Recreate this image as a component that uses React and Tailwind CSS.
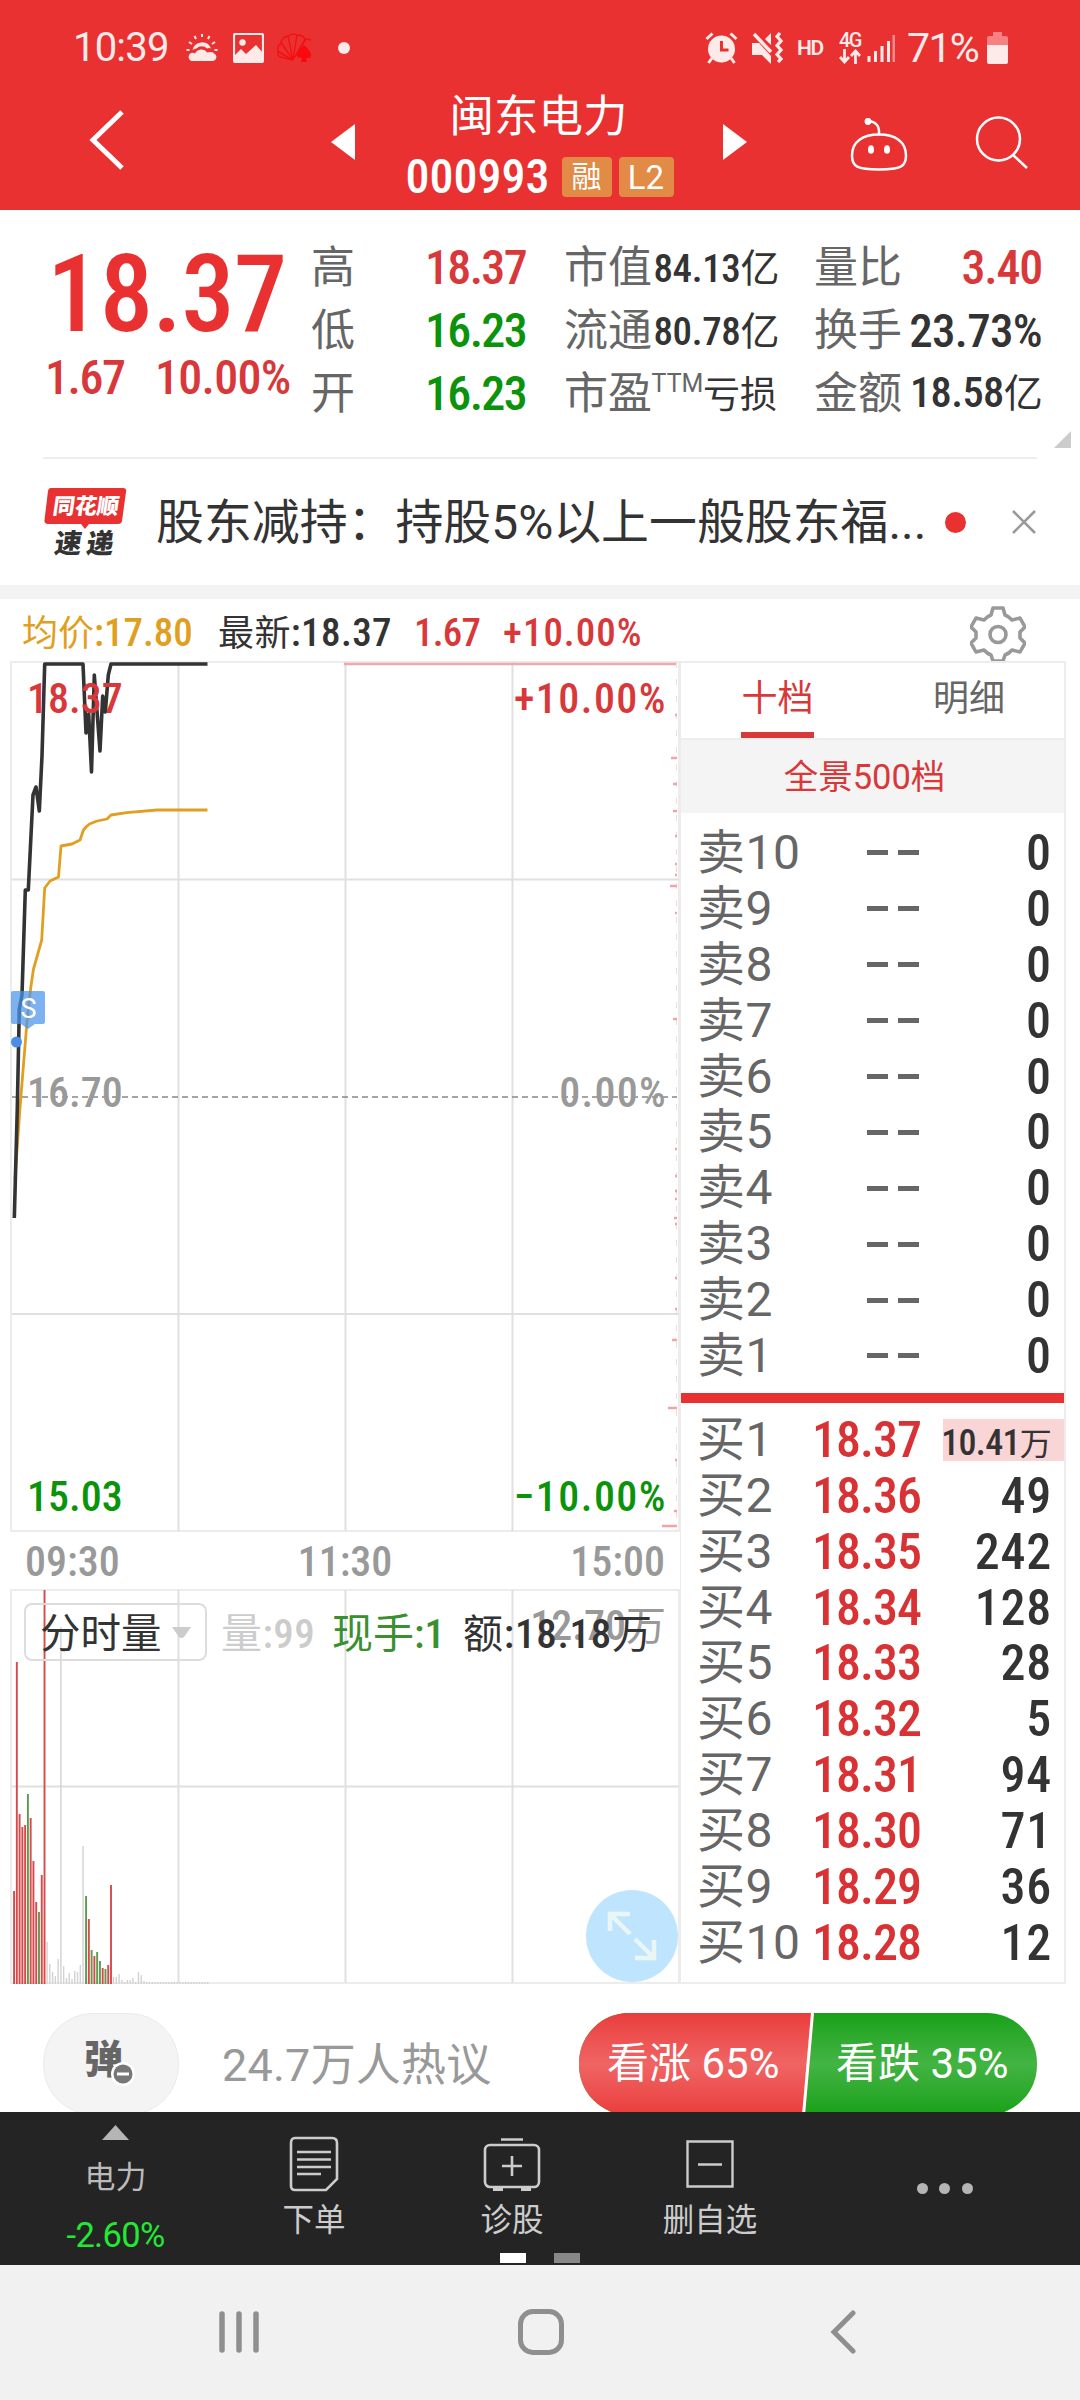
// src/App.jsx
import React from 'react';

const BODY = "[font-family:Roboto,'Noto_Sans_CJK_SC',sans-serif]";
const NUM = "[font-family:'Roboto_Condensed','Noto_Sans_CJK_SC',sans-serif] font-[480]";

const SELL_LEVELS = [10, 9, 8, 7, 6, 5, 4, 3, 2, 1];

const BUY_LEVELS = [
  { level: 1, price: '18.37', volume: '10.41', highlight: true },
  { level: 2, price: '18.36', volume: '49' },
  { level: 3, price: '18.35', volume: '242' },
  { level: 4, price: '18.34', volume: '128' },
  { level: 5, price: '18.33', volume: '28' },
  { level: 6, price: '18.32', volume: '5' },
  { level: 7, price: '18.31', volume: '94' },
  { level: 8, price: '18.30', volume: '71' },
  { level: 9, price: '18.29', volume: '36' },
  { level: 10, price: '18.28', volume: '12' }
];

const PRICE_LINE =
  '14.3,1218 17.3,1108 19.3,1009 22,995 25.3,890 28.3,890 33,795 36,787 39.3,811 42,756 44.7,664 83,664 86,733 88.7,714 91.5,772 94.3,675 100,751 102.7,696 105.3,712 108.3,675 111,664 207.5,664';

const AVG_LINE =
  '15,1179 20,1108 26.7,1025 30.7,988 33.5,969 37.5,955 41.7,940 44.7,888 50,881 58.5,877 61,846 72,844 80,840 83.5,830 86,827 89.5,824 97,821 107,819 111,815 126.7,812.6 157,810 207.5,810';

// [y, length] of each price-distribution tick
const TICKS = [
  [715, 2], [758, 6], [784, 4], [811, 4], [836, 2], [864, 2], [875, 2], [886, 7], [913, 2],
  [1019, 4], [1149, 2], [1176, 2], [1191, 2], [1199, 2], [1218, 3], [1224, 2], [1278, 2],
  [1309, 2], [1340, 5], [1408, 9], [1460, 2], [1511, 3], [1526, 15]
];

// [height, colour] per minute, r = up, g = down, n = flat
const VOLUME = [
  [93, 'r'], [322, 'r'], [170, 'r'], [157, 'r'], [159, 'r'], [190, 'g'], [166, 'r'], [123, 'r'],
  [82, 'r'], [72, 'g'], [109, 'r'], [394, 'r'], [42, 'n'], [20, 'n'], [12, 'n'], [8, 'n'],
  [25, 'n'], [357, 'n'], [18, 'n'], [6, 'n'], [11, 'n'], [5, 'n'], [13, 'n'], [12, 'n'],
  [19, 'n'], [138, 'n'], [88, 'g'], [65, 'r'], [34, 'g'], [28, 'r'], [32, 'g'], [23, 'g'],
  [16, 'r'], [15, 'g'], [19, 'r'], [99, 'r'], [7, 'n'], [7, 'n'], [10, 'n'], [4, 'n'],
  [2, 'n'], [4, 'n'], [4, 'n'], [6, 'n'], [2, 'n'], [12, 'n'], [9, 'n'], [3, 'n'],
  ...Array(23).fill([2, 'n'])
];

const VOLUME_COLORS = { r: '#d8494a', g: '#5c9a50', n: '#d2d2d2' };

const StatusBar = () => (
  <div className="flex h-24 items-center pl-[73px] pr-[72px] text-[#ffeaea]">
    <span className="w-[113px] text-[40px] leading-none tracking-[-0.02em]">10:39</span>
    <svg className="h-[30px] w-8" viewBox="0 0 32 30" fill="currentColor">
      <path d="M6.500 17a9.700 9.700 0 0 1 18.500-1.500q-2-.8-4 0a7 7 0 0 0-10.500 0q-2 .2-4 1.500z" />
      <path d="M5 28a4.5 4.5 0 0 1 0-8q2-.6 4 .4a7 7 0 0 1 12-1q6-1 7 1a4 4 0 0 1-1 7.600z" />
      <path d="M16 1v3M8.500 3l1.500 3M23.500 3l-1.500 3M3 9l3 2M29 9l-3 2M.5 17h3M31.500 17h-3" stroke="currentColor" strokeWidth="2" />
    </svg>
    <svg className="ml-[15px] h-[30px] w-[31px]" viewBox="0 0 31 30">
      <rect x="1" y="1" width="29" height="28" rx="1.500" fill="none" stroke="currentColor" strokeWidth="2.200" />
      <circle cx="9.500" cy="9.500" r="3.200" fill="currentColor" />
      <path d="M2 22l6-6 5 5 10-9 7 8v8H2z" fill="currentColor" />
    </svg>
    <svg className="ml-3 h-[30px] w-9" viewBox="0 0 36 30">
      <g fill="none" stroke="#f50f12" strokeWidth="1.300" strokeLinejoin="round">
        <path d="M17 27L4 24q-3-2-2-5zM17 27L2 18q-1-5 3-8zM17 27L5 9q2-5 7-6zM17 27L12 3q4-3 9-1zM17 27L21 2q6 0 8 4zM19 24L30 6l5 1" />
      </g>
      <path d="M28 12q7 6 7 10t-5 3l1 4h-6l1-4q-5 0-5-3t7-10z" fill="#fa0a10" />
    </svg>
    <span className="ml-[26px] size-3 rounded-full bg-[#ffeaea]" />
    <svg className="ml-auto h-8 w-[33px]" viewBox="0 0 33 32" fill="currentColor">
      <circle cx="16.500" cy="17" r="13.500" />
      <path d="M1.500 7l6-5.500M31.500 7l-6-5.500M7 26l-3.500 5M26 26l3.500 5" stroke="currentColor" strokeWidth="3" />
      <path d="M16.500 9v9h7" fill="none" stroke="#e83130" strokeWidth="3" />
    </svg>
    <svg className="ml-[13px] h-8 w-8" viewBox="0 0 32 32" fill="currentColor">
      <path d="M1 11h7l12 13v8l-9-9H1zM14 7l6-6v12z" />
      <path d="M3 2l17 18" stroke="currentColor" strokeWidth="3.500" />
      <path d="M29 1l-3 3.500 4 4.500-4 4.500 4 4.500-4 4.500 4 4.500-3 3" fill="none" stroke="currentColor" strokeWidth="3.200" />
    </svg>
    <span className="ml-[14px] w-[28px] text-[21px] font-semibold leading-none tracking-[-0.06em]">HD</span>
    <div className="ml-3 flex w-[26px] flex-col items-center">
      <span className="text-[20px] font-medium leading-[17px] tracking-[-0.08em]">4G</span>
      <svg className="h-[15px] w-[22px]" viewBox="0 0 22 15" fill="none" stroke="currentColor" strokeWidth="2.800">
        <path d="M5.500 0v13M1 8l4.500 5L10 8M16.500 15V2M12 7l4.500-5L21 7" />
      </svg>
    </div>
    <svg className="ml-1 h-7 w-[28px]" viewBox="0 0 28 28">
      <path d="M2 22v6M8.500 17v11M15 12v16M21.500 7v21" stroke="currentColor" strokeWidth="3" />
      <path d="M27 1v27" stroke="#f48a89" strokeWidth="3" />
    </svg>
    <span className="ml-3 w-[80px] whitespace-nowrap text-[41px] leading-none tracking-[-0.040em]">71%</span>
    <svg className="h-8 w-[21px]" viewBox="0 0 21 32">
      <path d="M6 0h9v4h4q2 0 2 2v8H0V6q0-2 2-2h4z" fill="#f58180" />
      <path d="M0 13h21v17q0 2-2 2H2q-2 0-2-2z" fill="currentColor" />
    </svg>
  </div>
);

const TitleBar = () => (
  <div className="flex h-[114px] items-start text-white">
    <svg className="ml-[88px] mt-[13px] h-[62px] w-9" viewBox="0 0 36 62" fill="none" stroke="currentColor" strokeWidth="5">
      <path d="M34 3L5 31l29 28" />
    </svg>
    <svg className="ml-[207px] mt-7 h-9 w-6" viewBox="0 0 24 36" fill="currentColor">
      <path d="M24 0v36L0 18z" />
    </svg>
    <div className="flex w-[369px] flex-col items-center">
      <div className="-ml-[2px] -mt-[5px] text-[44.500px] leading-[52px]">闽东电力</div>
      <div className="mt-[6px] flex items-center">
        <span className={`${NUM} w-[156px] whitespace-nowrap text-[48px] leading-[56px]`}>000993</span>
        <span className="mr-[7px] flex h-10 w-[50px] items-center justify-center rounded bg-[#e28b46] text-[30px] leading-none">融</span>
        <span className="flex h-10 w-[55px] items-center justify-center rounded bg-[#e28b46] text-[33px] leading-none">L2</span>
      </div>
    </div>
    <svg className="-ml-px mt-7 h-9 w-6" viewBox="0 0 24 36" fill="currentColor">
      <path d="M0 0v36l24-18z" />
    </svg>
    <svg className="ml-[103px] mt-[21px] h-[54px] w-[58px]" viewBox="0 0 58 54" fill="none" stroke="currentColor" strokeWidth="2.500">
      <path d="M29 17.500c16 0 27 7 27 21c0 11-5 14-27 14s-27-3-27-14c0-14 11-21 27-21z" />
      <path d="M29 17q1-12-11-13" />
      <circle cx="18" cy="4.500" r="3.400" fill="currentColor" stroke="none" />
      <ellipse cx="21" cy="32.500" rx="3" ry="4.300" fill="currentColor" stroke="none" />
      <ellipse cx="37" cy="32.500" rx="3" ry="4.300" fill="currentColor" stroke="none" />
    </svg>
    <svg className="ml-[67px] mt-[19px] h-[54px] w-[54px]" viewBox="0 0 54 54" fill="none" stroke="currentColor" strokeWidth="2.500">
      <circle cx="23.500" cy="24" r="21.500" />
      <path d="M38 40l14 13" />
    </svg>
  </div>
);

const Stat = ({ label, children, className }) => (
  <div className="flex h-[63px] items-center justify-between">
    <span className="whitespace-nowrap text-[44px] leading-none text-[#666]">{label}</span>
    <span className={`${NUM} whitespace-nowrap leading-none ${className}`}>{children}</span>
  </div>
);

const Quote = () => (
  <div className="relative flex h-[247px] pt-[26px]">
    <div className="w-[311px] text-[#e83130]">
      <div className={`${NUM} pl-[47px] pt-[11px] text-[107px] leading-[96px] tracking-[-0.008em]`}>18.37</div>
      <div className={`${NUM} flex pl-[45px] pt-[9px] text-[48px] leading-[52px] tracking-[-0.015em] text-[#d9383a]`}>
        <span className="w-[110px] tracking-[-0.03em]">1.67</span>
        <span className="whitespace-nowrap">10.00%</span>
      </div>
    </div>
    <div className="w-[215px]">
      <Stat label="高" className="text-[48px] tracking-[-0.035em] text-[#d9383a]">18.37</Stat>
      <Stat label="低" className="text-[48px] tracking-[-0.035em] text-[#0c930c]">16.23</Stat>
      <Stat label="开" className="text-[48px] tracking-[-0.035em] text-[#0c930c]">16.23</Stat>
    </div>
    <div className="ml-[38px] w-[215px]">
      <Stat label="市值" className="pt-1 text-[39px] tracking-[-0.01em] text-[#333]">84.13<span className="font-normal">亿</span></Stat>
      <Stat label="流通" className="pt-1 text-[39px] tracking-[-0.01em] text-[#333]">80.78<span className="font-normal">亿</span></Stat>
      <div className="flex h-[63px] items-center justify-between">
        <span className="text-[44px] leading-none text-[#666]">市盈</span>
        <span className="-ml-2 -mt-5 text-[25px] leading-none text-[#666]">TTM</span>
        <span className="-ml-2 pr-0.5 pt-1 text-[37px] leading-none text-[#333]">亏损</span>
      </div>
    </div>
    <div className="ml-[35px] w-[228px]">
      <Stat label="量比" className="text-[48px] tracking-[-0.025em] text-[#d9383a]">3.40</Stat>
      <Stat label="换手" className="text-[47px] tracking-[-0.015em] text-[#333]">23.73%</Stat>
      <Stat label="金额" className="text-[42.500px] tracking-[-0.015em] text-[#333]">18.58<span className="text-[39px] font-normal">亿</span></Stat>
    </div>
    <svg className="absolute bottom-[9px] right-[9px] size-[17px]" viewBox="0 0 17 17" fill="#ccc">
      <path d="M17 0v17H0z" />
    </svg>
  </div>
);

const News = () => (
  <div className="mx-[43px] flex h-32 items-center border-t-2 border-[#eee]">
    <svg className="h-[76px] w-[85px] overflow-visible" viewBox="0 -2 85 76">
      <path d="M8 2h72q4 0 3 4l-4 29q-.6 3-4 3H46l-4 5-4-5H5q-4 0-3.500-4L5 5q.6-3 3-3z" fill="#e83130" />
      <g className="[font-family:'Noto_Sans_CJK_SC',sans-serif]" transform="skewX(-8)" fontWeight="900">
        <text x="13" y="28.500" fontSize="22" fill="#fff">同花顺</text>
        <text x="20" y="67" fontSize="27" letterSpacing="5" fill="#333">速递</text>
      </g>
    </svg>
    <span className="ml-7 w-[780px] whitespace-nowrap pt-1 text-[47.900px] leading-none text-[#333]">股东减持：持股5%以上一般股东福...</span>
    <span className="ml-[9px] size-[21px] shrink-0 rounded-full bg-[#e83130]" />
    <svg className="ml-[46px] size-6 shrink-0" viewBox="0 0 24 24" stroke="#999" strokeWidth="2.600">
      <path d="M1 1l22 22M23 1L1 23" />
    </svg>
  </div>
);

const Summary = () => (
  <div className={`${NUM} flex h-[62px] items-center pl-[22px] pt-[7px] text-[39px] leading-none text-[#333]`}>
    <div className="flex w-[196px] items-center whitespace-nowrap text-[#e09f20]">
      <span className="text-[36px] font-normal">均价</span>:17.80
    </div>
    <div className="flex w-[196px] items-center whitespace-nowrap tracking-[0.010em]">
      <span className="text-[36px] font-normal">最新</span>:18.37
    </div>
    <span className="w-[89px] tracking-[-0.02em] text-[#d9383a]">1.67</span>
    <span className="w-[467px] tracking-[0.025em] text-[#d9383a]">+10.00%</span>
    <svg className="size-[56px]" viewBox="0 0 56 56" fill="none" stroke="#999" strokeWidth="3.600" strokeLinejoin="round">
      <path d="M23 2h10l2 7q4 1.500 7 5l8-2 5 9-5 5v6l5 5-5 9-8-2q-3 3.500-7 5l-2 6H23l-2-6q-4-1.500-7-5l-8 2-5-9 5-5v-6l-5-5 5-9 8 2q3-3.500 7-5z" />
      <circle cx="28" cy="28.500" r="8" />
    </svg>
  </div>
);

const PriceChart = () => (
  <div className="relative h-[871px]">
    <svg className="block h-[871px] w-[670px]" viewBox="10 661 670 871" fill="none">
      <rect x="11" y="662" width="668" height="869" stroke="#ececec" strokeWidth="2" />
      <path d="M178.500 662v869M345.500 662v869M512.500 662v869M12 879.500h667M12 1314h667" stroke="#e0e0e0" strokeWidth="2" />
      <path d="M12 1097h665" stroke="#888" strokeWidth="1.600" strokeDasharray="6 4" />
      <path d="M344 664h333" stroke="#f0a9ab" strokeWidth="2.500" />
      <path d="M676.500 662v869" stroke="#f8d9da" strokeWidth="1" strokeDasharray="6 11" />
      {TICKS.map(([y, len]) => (
        <path key={y} d={`M${677 - len} ${y}h${len}`} stroke="#efa5a7" strokeWidth="2.500" />
      ))}
      <polyline points={AVG_LINE} stroke="#e09f20" strokeWidth="2.800" strokeLinejoin="round" />
      <polyline points={PRICE_LINE} stroke="#333" strokeWidth="3.600" strokeLinejoin="round" />
      <path d="M13 991h30q2 0 2 2v29q0 2-2 2H35l-7 5-7-5h-8q-2 0-2-2v-29q0-2 2-2z" fill="#4a94ea" fillOpacity="0.720" />
      <circle cx="16.500" cy="1042" r="5.500" fill="#4a8fe5" />
      <text x="20.500" y="1018" fontSize="27" fill="#fff">S</text>
    </svg>
    <div className={`${NUM} absolute inset-0 flex flex-col justify-between pb-[13px] pl-[17px] pr-[13px] pt-[16px] text-[42px] leading-[44px]`}>
      <div className="flex justify-between text-[#d9383a]">
        <span>18.37</span>
        <span className="tracking-[0.035em]">+10.00%</span>
      </div>
      <div className="-mt-[10px] flex justify-between text-[#999]">
        <span>16.70</span>
        <span className="tracking-[0.030em]">0.00%</span>
      </div>
      <div className="flex justify-between text-[#0c930c]">
        <span>15.03</span>
        <span className="tracking-[0.035em]">−10.00%</span>
      </div>
    </div>
  </div>
);

const VolumeChart = () => (
  <div className="relative h-[395px]">
    <svg className="block h-[395px] w-[670px]" viewBox="10 1589 670 395" fill="none">
      <rect x="11" y="1590" width="668" height="393" stroke="#ececec" strokeWidth="2" />
      <path d="M178.500 1590v393M345.500 1590v393M512.500 1590v393M12 1786.500h667" stroke="#e0e0e0" strokeWidth="2" />
      {VOLUME.map(([h, c], i) => (
        <rect key={i} x={13.100 + i * 2.770} y={1984 - h} width={c === 'n' ? 1.400 : 1.900} height={h} fill={VOLUME_COLORS[c]} />
      ))}
    </svg>
    <div className={`${NUM} absolute right-[14px] top-[15px] text-[42px] leading-[44px] text-[#999]`}>
      12.70<span className="text-[40px] font-normal">万</span>
    </div>
    <div className={`${NUM} absolute left-[14px] top-[14px] flex h-[58px] items-center whitespace-nowrap text-[41px] leading-none`}>
      <div className="flex h-[58px] w-[183px] items-center rounded-lg border-2 border-[#ddd] pl-[14px] font-normal text-[#333]">
        <span className="pt-1 text-[40.500px]">分时量</span>
        <svg className="ml-[10px] h-[11px] w-[19px]" viewBox="0 0 19 11" fill="#ccc">
          <path d="M0 0h19l-7 10q-2.500 2-5 0z" />
        </svg>
      </div>
      <span className="ml-[14px] w-[111px] pt-1 tracking-[0.010em] text-[#ccc]"><span className="font-normal">量</span>:99</span>
      <span className="w-[131px] pt-1 text-[#3a9030]"><span className="font-normal">现手</span>:1</span>
      <span className="pt-1 tracking-[0.018em] text-[#333]"><span className="text-[40px] font-normal">额</span>:18.18<span className="text-[40px] font-normal">万</span></span>
    </div>
    <div className="absolute bottom-[2px] right-[2px] flex size-[92px] items-center justify-center rounded-full bg-[#bfe4fe]">
      <svg className="size-[50px]" viewBox="0 0 50 50" fill="none" stroke="#eaf6f4" strokeWidth="4.500">
        <path d="M3 20V3h20M4 4l19 19M47 29v18H28M46 46L28 28" />
      </svg>
    </div>
  </div>
);

const OrderBook = () => (
  <div className="flex h-[1323px] w-[386px] flex-col border-2 border-l border-[#ededed] bg-white text-[48px] leading-none">
    <div className="flex h-[77px] border-b-2 border-[#ededed] pl-[60px] text-[36px]">
      <div className="flex w-[73px] flex-col items-center justify-between pt-[18px] text-[#d9383a]">
        十档
        <span className="h-1.5 w-full bg-[#d9383a]" />
      </div>
      <div className="ml-[119px] pt-[18px] text-[#666]">明细</div>
    </div>
    <div className="flex h-[73px] items-center justify-center bg-[#f4f4f4] pr-4 pt-0.5 text-[34.500px] text-[#d9383a]">
      全景500档
    </div>
    <div className="flex flex-col pt-[12px]">
      {SELL_LEVELS.map((level) => (
        <div key={level} className="flex h-[55.900px] items-center pl-4 pr-[13px] text-[#666]">
          <span className="w-[170px] tracking-[0.010em]">卖{level}</span>
          <span className="flex w-[52px] justify-between">
            <span className="h-[5px] w-[21px] bg-[#666]" />
            <span className="h-[5px] w-[21px] bg-[#666]" />
          </span>
          <span className={`${NUM} ml-auto text-[50px] text-[#333]`}>0</span>
        </div>
      ))}
    </div>
    <div className="mt-[9px] h-[10px] bg-[#e83130]" />
    <div className="flex flex-col pt-[9px]">
      {BUY_LEVELS.map(({ level, price, volume, highlight }) => (
        <div key={level} className="flex h-[55.900px] items-center pl-4 text-[#666]">
          <span className="w-[115px] whitespace-nowrap tracking-[0.010em]">买{level}</span>
          <span className={`${NUM} text-[50px] tracking-[-0.020em] text-[#d93234]`}>{price}</span>
          {highlight ? (
            <span className={`${NUM} ml-auto flex h-[42px] w-[121px] items-end justify-end whitespace-nowrap bg-[#f9d5d5] pr-[13px] text-[36px] tracking-[-0.020em] text-[#333]`}>
              <span>{volume}<span className="text-[32px] font-normal">万</span></span>
            </span>
          ) : (
            <span className={`${NUM} ml-auto pr-[12px] text-[50px] tracking-[0.015em] text-[#333]`}>{volume}</span>
          )}
        </div>
      ))}
    </div>
  </div>
);

const Sentiment = () => (
  <div className="flex h-32 overflow-hidden pl-[43px] pt-[29px]">
    <div className="flex h-[102px] w-[136px] shrink-0 justify-center rounded-[50px] border border-[#ebebeb] bg-[#f4f4f4]">
      <svg className="mt-[22px] h-[54px] w-[56px]" viewBox="0 0 56 54">
        <text x="1" y="37" fontSize="39" fontWeight="900" fill="#666">弹</text>
        <circle cx="40" cy="38" r="12" fill="#fff" />
        <circle cx="40" cy="38" r="9.500" fill="#777" />
        <path d="M34 38h12" stroke="#fff" strokeWidth="3" />
      </svg>
    </div>
    <div className="ml-[43px] w-[357px] text-[45px] leading-[105px] tracking-[0.005em] text-[#999]">24.7万人热议</div>
    <div className="relative flex h-[102px] w-[458px] overflow-hidden rounded-[50px] bg-linear-to-b from-[#17a117] via-[#42b442] to-[#17a117] text-[42px] leading-[102px] text-white">
      <div className="w-[235px] bg-linear-to-b from-[#e93c3c] via-[#f06464] to-[#e93c3c] pl-[28px] [clip-path:polygon(0_0,100%_0,226px_100%,0_100%)]">看涨 65%</div>
      <div className="pl-[22px]">看跌 35%</div>
      <svg className="absolute left-[222px] top-0 h-[102px] w-4" viewBox="0 0 16 102">
        <path d="M11.500 0L2.500 102" stroke="#fff" strokeWidth="3" />
      </svg>
    </div>
  </div>
);

const ToolItem = ({ label, children }) => (
  <div className="flex w-[198px] flex-col items-center pt-5">
    <div className="flex h-[64px] items-center">{children}</div>
    <span className="pt-px text-[31.500px] leading-[48px]">{label}</span>
  </div>
);

const Toolbar = () => (
  <div className="relative flex h-[153px] bg-[#242424] text-[#ccc]">
    <div className="flex w-[215px] flex-col items-center pl-4 pt-[13px] text-[#bbb]">
      <svg className="h-[15px] w-[27px]" viewBox="0 0 27 15" fill="#b5b5b5">
        <path d="M13.500 0L27 15H0z" />
      </svg>
      <span className="pt-[15px] text-[31px] leading-[46px]">电力</span>
      <span className="pt-[14px] text-[34.500px] leading-[40px] tracking-[-0.02em] text-[#22e932]">-2.60%</span>
    </div>
    <ToolItem label="下单">
      <svg className="h-[56px] w-[50px]" viewBox="0 0 50 56" fill="none" stroke="currentColor" strokeWidth="2.600">
        <path d="M6 2h37q5 0 5 5v36L37 54H6q-4 0-4-4V7q0-5 4-5zM8 16h34M8 23.500h34M8 31h34M8 38h24" />
      </svg>
    </ToolItem>
    <ToolItem label="诊股">
      <svg className="h-[54px] w-[58px]" viewBox="0 0 58 54" fill="none" stroke="currentColor" strokeWidth="2.600">
        <rect x="2" y="8" width="54" height="42" rx="5" />
        <path d="M18 2.500h22M29 19v20M19 29h20" />
        <path d="M10 52h10M38 52h10" strokeWidth="4" />
      </svg>
    </ToolItem>
    <ToolItem label="删自选">
      <svg className="size-12" viewBox="0 0 48 48" fill="none" stroke="currentColor" strokeWidth="2.400">
        <path d="M1.500 1.500h45v45h-45zM12 24.500h24" />
      </svg>
    </ToolItem>
    <div className="flex flex-1 items-center justify-center gap-[11.500px]">
      <span className="size-[11px] rounded-full bg-[#b5b5b5]" />
      <span className="size-[11px] rounded-full bg-[#b5b5b5]" />
      <span className="size-[11px] rounded-full bg-[#b5b5b5]" />
    </div>
    <div className="absolute bottom-[2px] left-[500px] flex gap-7">
      <span className="h-2.5 w-[26px] bg-white" />
      <span className="h-2.5 w-[26px] bg-[#888]" />
    </div>
  </div>
);

const SystemNav = () => (
  <div className="flex h-[135px] items-center bg-[#f1f1f1] pb-0.5 pl-[219px] text-[#8f8f8f]">
    <svg className="h-11 w-10" viewBox="0 0 40 44" stroke="currentColor" strokeWidth="5.500" strokeLinecap="round">
      <path d="M3 4v36M20 4v36M37 4v36" />
    </svg>
    <span className="ml-[259px] h-[46px] w-[46px] rounded-[15px] border-[5.500px] border-[#8f8f8f]" />
    <svg className="ml-[266px] h-11 w-[26px]" viewBox="0 0 26 44" fill="none" stroke="currentColor" strokeWidth="5" strokeLinecap="round">
      <path d="M23 3L4 22l19 19" />
    </svg>
  </div>
);

const App = () => (
  <div className={`${BODY} h-[2400px] w-[1080px] overflow-hidden bg-white`}>
    <div className="h-[210px] bg-[#e83130]">
      <StatusBar />
      <TitleBar />
    </div>
    <Quote />
    <News />
    <div className="h-[14px] bg-[#f3f3f3]" />
    <Summary />
    <div className="flex h-[1323px] pl-[10px]">
      <div className="w-[670px]">
        <PriceChart />
        <div className={`${NUM} flex h-[57px] items-center justify-between pl-[15px] pr-[15px] pt-0.5 text-[42px] leading-none text-[#999]`}>
          <span>09:30</span>
          <span>11:30</span>
          <span>15:00</span>
        </div>
        <VolumeChart />
      </div>
      <OrderBook />
    </div>
    <Sentiment />
    <Toolbar />
    <SystemNav />
  </div>
);

export default App;
